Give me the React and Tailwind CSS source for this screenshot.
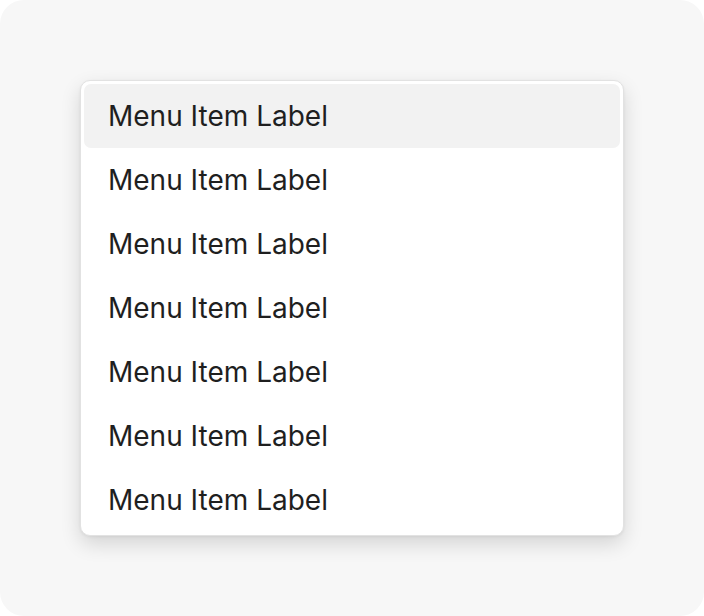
const items = Array.from({ length: 7 }, () => 'Menu Item Label')

export default function App() {
  return (
    <div className="h-[616px] w-[704px] bg-white">
      <div className="flex h-full w-full items-center justify-center rounded-[24px] bg-[#f7f7f7]">
        <div className="w-[544px] rounded-[10px] border border-[#e2e2e2] bg-white p-[3px] shadow-[0_8px_20px_rgba(0,0,0,0.14),0_1px_3px_rgba(0,0,0,0.06)]">
          {items.map((label, i) => (
            <div
              key={i}
              className={`flex h-16 items-center rounded-[7px] px-6 font-['Inter',sans-serif] text-[28px] text-[#1f1f1f] ${
                i === 0 ? 'bg-[#f2f2f2]' : ''
              }`}
            >
              {label}
            </div>
          ))}
        </div>
      </div>
    </div>
  )
}
